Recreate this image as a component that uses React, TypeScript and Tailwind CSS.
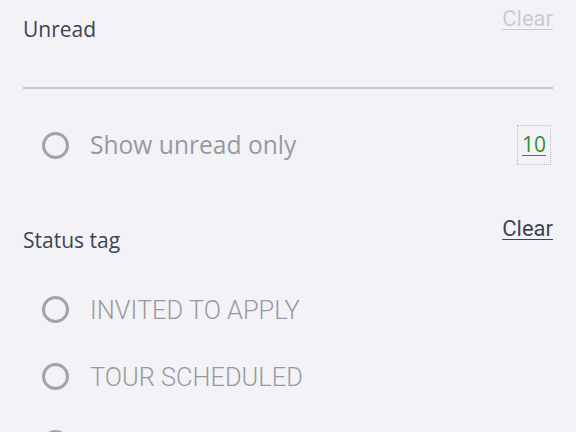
import React from 'react'

function Radio() {
  return (
    <span className="block h-[27px] w-[27px] shrink-0 rounded-full border-[3px] border-[#a3a3a7]" />
  )
}

const statuses = ['INVITED TO APPLY', 'TOUR SCHEDULED', 'APPLICATION SENT']

export default function App() {
  return (
    <div className="h-[432px] w-[576px] overflow-hidden bg-[#f3f3f7] px-[23px]">
      {/* Unread */}
      <div className="relative h-[89px] border-b-2 border-[#c6c6ca]">
        <h3 className="absolute left-0 top-[14px] font-['Open_Sans',sans-serif] text-[21px] leading-[30px] text-[#3e4450]">
          Unread
        </h3>
        <button className="absolute right-0 top-[5px] font-['Roboto',sans-serif] text-[22px] leading-[28px] text-[#cbcbcf] underline underline-offset-[3px] decoration-1">
          Clear
        </button>
      </div>
      <div className="flex h-[114px] items-center pl-[19px] pr-[2px] pb-[2px]">
        <Radio />
        <span className="ml-[21px] flex-1 font-['Open_Sans',sans-serif] text-[24.6px] leading-[34px] text-[#99999d]">
          Show unread only
        </span>
        <span className="flex h-[40px] w-[34px] items-center justify-center border border-dotted border-[#bdbdbd] font-['Open_Sans',sans-serif] text-[21px] text-[#2f8f2f] underline underline-offset-[3px] decoration-1">
          10
        </span>
      </div>
      {/* Status tag */}
      <div className="relative h-[60px]">
        <h3 className="absolute left-0 top-[22px] font-['Open_Sans',sans-serif] text-[21px] leading-[30px] text-[#3e4450]">
          Status tag
        </h3>
        <button className="absolute right-0 top-[12px] font-['Roboto',sans-serif] text-[22px] leading-[28px] text-[#3e4450] underline underline-offset-[3px] decoration-1">
          Clear
        </button>
      </div>
      <div className="flex flex-col pt-[13px]">
        {statuses.map((s) => (
          <div key={s} className="flex h-[67px] items-center pl-[19px]">
            <Radio />
            <span className="ml-[21px] font-['Roboto',sans-serif] text-[25.4px] font-light leading-[34px] text-[#99999d]">
              {s}
            </span>
          </div>
        ))}
      </div>
    </div>
  )
}
